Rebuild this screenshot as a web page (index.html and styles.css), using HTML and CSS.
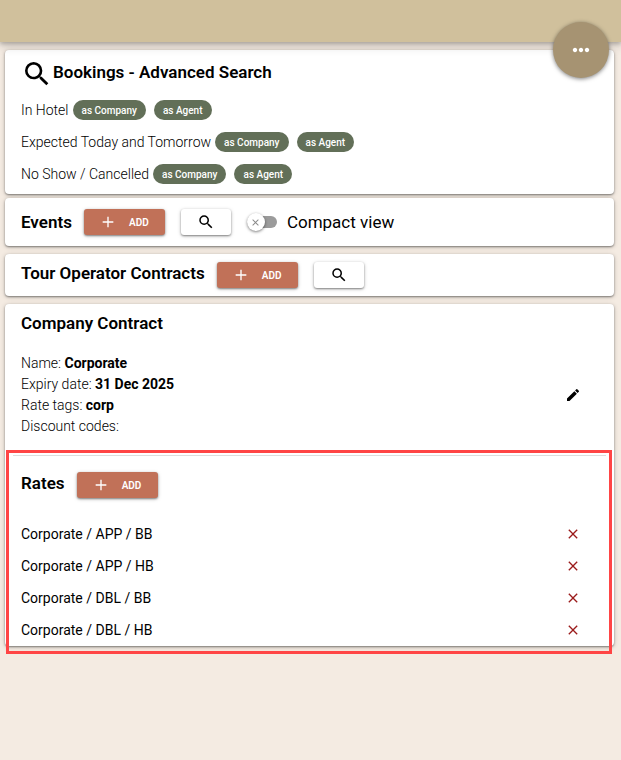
FILE: index.html
```html
<!DOCTYPE html>
<html lang="en">
<head>
    <meta charset="UTF-8">
    <meta name="viewport" content="width=device-width, initial-scale=1.0">
    <title>Company Profile</title>
    <link rel="stylesheet" href="styles.css">
</head>
<body>
    <!-- Shared icons -->
    <svg class="sprite" aria-hidden="true">
        <symbol id="icon-search" viewBox="0 0 24 24">
            <path d="M15.5 14h-.79l-.28-.27A6.471 6.471 0 0 0 16 9.5 6.5 6.5 0 1 0 9.5 16c1.61 0 3.09-.59 4.23-1.57l.27.28v.79l5 4.99L20.49 19l-4.99-5zm-6 0C7.01 14 5 11.99 5 9.5S7.01 5 9.5 5 14 7.01 14 9.5 11.99 14 9.5 14z"/>
        </symbol>
        <symbol id="icon-add" viewBox="0 0 24 24">
            <path d="M20 13h-7v7h-2v-7H4v-2h7V4h2v7h7z"/>
        </symbol>
        <symbol id="icon-close" viewBox="0 0 24 24">
            <path d="M19 6.41L17.59 5 12 10.59 6.41 5 5 6.41 10.59 12 5 17.59 6.41 19 12 13.41 17.59 19 19 17.59 13.41 12z"/>
        </symbol>
        <symbol id="icon-edit" viewBox="0 0 24 24">
            <path d="M3 17.25V21h3.75L17.81 9.94l-3.75-3.75L3 17.25zM20.71 7.04a.996.996 0 0 0 0-1.41l-2.34-2.34a.996.996 0 0 0-1.41 0l-1.83 1.83 3.75 3.75 1.83-1.83z"/>
        </symbol>
        <symbol id="icon-more" viewBox="0 0 24 24">
            <path d="M6 9.800c-1.200 0-2.200 1-2.200 2.200s1 2.200 2.200 2.200 2.200-1 2.200-2.200-1-2.200-2.200-2.200zm12 0c-1.200 0-2.200 1-2.200 2.200s1 2.200 2.200 2.200 2.200-1 2.200-2.200-1-2.200-2.200-2.200zm-6 0c-1.200 0-2.200 1-2.200 2.200s1 2.200 2.200 2.200 2.200-1 2.200-2.200-1-2.200-2.200-2.200z"/>
        </symbol>
    </svg>

    <header class="topbar">
        <button class="menu-btn" type="button" aria-label="More actions">
            <svg><use href="#icon-more"/></svg>
        </button>
    </header>

    <main class="content">
        <section class="card bookings">
            <h2><svg><use href="#icon-search"/></svg>Bookings - Advanced Search</h2>
            <div class="search-row">
                <span>In Hotel</span>
                <button class="pill" type="button">as Company</button>
                <button class="pill" type="button">as Agent</button>
            </div>
            <div class="search-row">
                <span>Expected Today and Tomorrow</span>
                <button class="pill" type="button">as Company</button>
                <button class="pill" type="button">as Agent</button>
            </div>
            <div class="search-row">
                <span>No Show / Cancelled</span>
                <button class="pill" type="button">as Company</button>
                <button class="pill" type="button">as Agent</button>
            </div>
        </section>

        <section class="card toolbar events">
            <h2>Events</h2>
            <button class="btn btn-add" type="button"><svg><use href="#icon-add"/></svg>ADD</button>
            <button class="btn btn-search" type="button" aria-label="Search events"><svg><use href="#icon-search"/></svg></button>
            <label class="switch">
                <input type="checkbox">
                <span class="track"><span class="thumb"><svg><use href="#icon-close"/></svg></span></span>
                Compact view
            </label>
        </section>

        <section class="card toolbar contracts">
            <h2>Tour Operator Contracts</h2>
            <button class="btn btn-add" type="button"><svg><use href="#icon-add"/></svg>ADD</button>
            <button class="btn btn-search" type="button" aria-label="Search contracts"><svg><use href="#icon-search"/></svg></button>
        </section>

        <section class="card contract">
            <h2>Company Contract</h2>
            <div class="contract-info">
                <div class="details">
                    <p>Name: <b>Corporate</b></p>
                    <p>Expiry date: <b>31 Dec 2025</b></p>
                    <p>Rate tags: <b>corp</b></p>
                    <p>Discount codes:</p>
                </div>
                <button class="icon-btn" type="button" aria-label="Edit contract"><svg><use href="#icon-edit"/></svg></button>
            </div>

            <div class="rates">
                <div class="rates-head">
                    <h2>Rates</h2>
                    <button class="btn btn-add" type="button"><svg><use href="#icon-add"/></svg>ADD</button>
                </div>
                <ul>
                    <li>Corporate / APP / BB <button class="icon-btn remove" type="button" aria-label="Remove Corporate / APP / BB"><svg><use href="#icon-close"/></svg></button></li>
                    <li>Corporate / APP / HB <button class="icon-btn remove" type="button" aria-label="Remove Corporate / APP / HB"><svg><use href="#icon-close"/></svg></button></li>
                    <li>Corporate / DBL / BB <button class="icon-btn remove" type="button" aria-label="Remove Corporate / DBL / BB"><svg><use href="#icon-close"/></svg></button></li>
                    <li>Corporate / DBL / HB <button class="icon-btn remove" type="button" aria-label="Remove Corporate / DBL / HB"><svg><use href="#icon-close"/></svg></button></li>
                </ul>
            </div>
        </section>
    </main>
</body>
</html>
```
FILE: styles.css
```css
/* Global styles */
* {
    box-sizing: border-box;
}

body {
    margin: 0;
    background-color: #f4ebe2;
    color: #000;
    font-family: Roboto, sans-serif;
    font-size: 14px;
}

h2, p, ul {
    margin: 0;
    padding: 0;
}

h2 {
    font-size: 17px;
    line-height: 22px;
    font-weight: 600;
}

button {
    padding: 0;
    border: none;
    font-family: inherit;
    cursor: pointer;
}

svg {
    display: block;
    flex: none;
    fill: currentColor;
}

.sprite {
    position: absolute;
    width: 0;
    height: 0;
}

/* Top bar with the floating menu button */
.topbar {
    position: relative;
    z-index: 1;
    height: 42px;
    background-color: #d0c09c;
    box-shadow: 0 2px 4px rgba(0, 0, 0, 0.2), 0 4px 10px rgba(0, 0, 0, 0.16);
}

.menu-btn {
    position: absolute;
    top: 22px;
    right: 12px;
    display: flex;
    justify-content: center;
    align-items: center;
    width: 56px;
    height: 56px;
    border-radius: 50%;
    background-color: #a69372;
    color: #fff;
    box-shadow: 0 1px 4px rgba(0, 0, 0, 0.5);
}

.menu-btn svg {
    width: 24px;
    height: 24px;
}

/* Cards */
.content {
    padding: 8px 7px 24px 5px;
}

.card {
    margin-bottom: 8px;
    padding: 8px 16px;
    border-radius: 4px;
    background-color: #fff;
    box-shadow: 0 1px 2px rgba(0, 0, 0, 0.4), 0 1px 5px rgba(0, 0, 0, 0.2);
}

.bookings {
    margin-bottom: 4px;
    padding: 8px 16px 4px;
}

.bookings h2 {
    display: flex;
    margin-bottom: 4px;
    line-height: 28px;
}

.bookings h2 svg {
    width: 32px;
    height: 32px;
}

.search-row {
    display: flex;
    align-items: center;
    gap: 8px;
    height: 32px;
    font-weight: 300;
}

.search-row span {
    margin-right: -4px;
}

.pill {
    height: 20px;
    padding: 0 9px;
    border-radius: 10px;
    background-color: #626f58;
    color: #fff;
    font-size: 10px;
    font-weight: 500;
}

/* Title rows with buttons */
.toolbar {
    display: flex;
    align-items: center;
    gap: 16px;
}

.toolbar h2,
.rates-head h2 {
    margin-right: -4px;
}

.contracts h2,
.rates-head h2 {
    padding-bottom: 4px;
}

.events {
    padding: 11px 16px;
}

.btn {
    display: flex;
    justify-content: center;
    align-items: center;
    height: 26px;
    border-radius: 3px;
    box-shadow: 0 1px 2px rgba(0, 0, 0, 0.4), 0 1px 4px rgba(0, 0, 0, 0.2);
}

.btn-add {
    gap: 13px;
    width: 81px;
    background-color: #c17158;
    color: #fff;
    font-size: 10px;
    font-weight: 600;
}

.btn-add svg {
    width: 16px;
    height: 16px;
}

.btn-search {
    width: 50px;
    background-color: #fff;
    color: #000;
}

.btn-search svg {
    width: 18px;
    height: 18px;
}

.switch {
    display: flex;
    align-items: center;
    gap: 10px;
    font-size: 17px;
    cursor: pointer;
}

.switch input {
    position: absolute;
    opacity: 0;
}

.track {
    display: flex;
    align-items: center;
    width: 30px;
    height: 12px;
    border-radius: 6px;
    background-color: #9b9b9b;
}

.thumb {
    display: flex;
    justify-content: center;
    align-items: center;
    width: 18px;
    height: 18px;
    border-radius: 50%;
    background-color: #fff;
    color: #888;
    box-shadow: 0 1px 3px rgba(0, 0, 0, 0.5);
}

.thumb svg {
    width: 11px;
    height: 11px;
}

.switch input:checked + .track {
    justify-content: flex-end;
}

/* Company contract */
.contract {
    padding: 8px 0 0;
}

.contract > h2 {
    padding: 0 16px;
}

.contract-info {
    display: flex;
    justify-content: space-between;
    align-items: center;
    padding: 19px 31px 18px 16px;
}

.details {
    line-height: 21px;
    font-weight: 300;
}

.details b {
    font-weight: 700;
}

.icon-btn {
    display: flex;
    justify-content: center;
    align-items: center;
    width: 20px;
    height: 20px;
    background: none;
    color: #000;
}

.icon-btn svg {
    width: 16px;
    height: 16px;
}

.remove {
    color: #9b1c1c;
}

.rates {
    position: relative;
    margin: 0 8px;
    padding: 16px 8px 0;
    border-top: 1px solid #ddd;
}

/* Highlight frame round the rates block */
.rates::after {
    content: "";
    position: absolute;
    top: -6px;
    right: -6px;
    bottom: -8px;
    left: -7px;
    border: 3px solid #ff4545;
    pointer-events: none;
}

.rates-head {
    display: flex;
    align-items: center;
    gap: 16px;
}

.rates ul {
    margin-top: 20px;
    list-style: none;
}

.rates li {
    display: flex;
    justify-content: space-between;
    align-items: center;
    height: 32px;
    padding-right: 15px;
}
```
